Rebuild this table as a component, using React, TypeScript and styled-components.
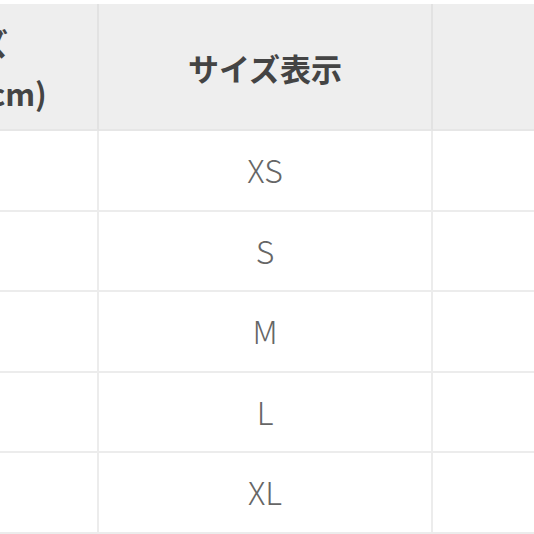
import React from 'react';
import styled, { createGlobalStyle } from 'styled-components';

const GlobalStyle = createGlobalStyle`
	html, body {
		margin: 0;
		padding: 0;
		background: #fff;
		overflow: hidden;
	}
	body {
		font-family: "Noto Sans CJK JP", "Noto Sans", sans-serif;
	}
`;

const Page = styled('div')`
	width: 534px;
	height: 534px;
	padding-top: 4px;
	box-sizing: border-box;
	overflow: hidden;
`;

const Table = styled('div')`
	display: grid;
	grid-template-columns: 334px 334px 334px;
	margin-left: -235px;
	width: 1002px;
`;

const HeadCell = styled('div')`
	box-sizing: border-box;
	height: 127px;
	background: #eeeeee;
	border-right: 2px solid #e2e2e2;
	border-bottom: 2px solid #e6e6e6;
	display: flex;
	align-items: center;
	justify-content: center;
	text-align: center;
	color: #444;
	font-weight: 700;
	font-size: 31px;
	line-height: 50px;
	padding-top: 2px;
`;

const Cell = styled('div')`
	box-sizing: border-box;
	height: 80.5px;
	background: #fff;
	border-right: 2px solid #ececec;
	border-bottom: 2px solid #ececec;
	display: flex;
	align-items: center;
	justify-content: center;
	color: #666;
	font-weight: 300;
	font-size: 32px;
	padding-bottom: 2px;
`;

const sizes = ['XS', 'S', 'M', 'L', 'XL'];

const App = () => {
	return (
		<Page>
			<GlobalStyle />
			<Table>
				<HeadCell>
					適応サイズ
					<br />
					(バスト寸法 cm)
				</HeadCell>
				<HeadCell>サイズ表示</HeadCell>
				<HeadCell />
				{sizes.map((s) => (
					<React.Fragment key={s}>
						<Cell />
						<Cell>{s}</Cell>
						<Cell />
					</React.Fragment>
				))}
			</Table>
		</Page>
	);
};

export default App;
